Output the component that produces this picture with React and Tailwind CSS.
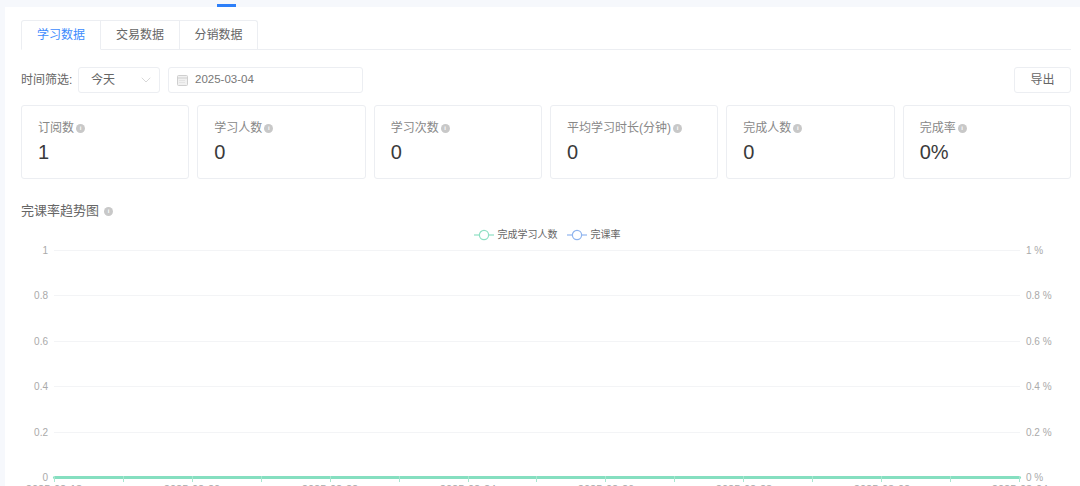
import React from "react";
import { ChevronDown } from "lucide-react";

const font = "font-['Liberation_Sans','Noto_Sans_CJK_SC',sans-serif]";

const stats = [
  { label: "订阅数", value: "1" },
  { label: "学习人数", value: "0" },
  { label: "学习次数", value: "0" },
  { label: "平均学习时长(分钟)", value: "0" },
  { label: "完成人数", value: "0" },
  { label: "完成率", value: "0%" },
];

const rows = [
  { left: "1", right: "1 %" },
  { left: "0.8", right: "0.8 %" },
  { left: "0.6", right: "0.6 %" },
  { left: "0.4", right: "0.4 %" },
  { left: "0.2", right: "0.2 %" },
];

const dates = ["2025-02-18", "2025-02-20", "2025-02-22", "2025-02-24", "2025-02-26", "2025-02-28", "2025-03-02", "2025-03-04"];
const ticks = Array.from({ length: 15 }, (_, i) => i);

const Dot = () => (
  <span className="inline-flex w-[9px] h-[9px] rounded-full bg-[#c8c8c8] items-center justify-center text-white text-[6px] leading-none font-bold">i</span>
);

const Legend = ({ color, label }) => (
  <div className="flex items-center gap-[4px]">
    <svg width="20" height="12" viewBox="0 0 20 12">
      <path d="M0 6h20" stroke={color} strokeWidth="1.2" />
      <circle cx="10" cy="6" r="4.6" fill="white" stroke={color} strokeWidth="1.2" />
    </svg>
    <span>{label}</span>
  </div>
);

const CalendarIcon = () => (
  <svg width="11" height="11" viewBox="0 0 11 11">
    <rect x="0.5" y="0.5" width="10" height="10" rx="1" fill="#f1f1f1" stroke="#cfcfcf" />
    <path d="M0.5 3h10" stroke="#cfcfcf" />
    <path d="M2.5 5.5h6M2.5 7.5h6" stroke="#d6d6d6" strokeDasharray="1 1" />
  </svg>
);

export default function App() {
  return (
    <div className={`w-[1080px] h-[486px] overflow-hidden bg-[#f6f8fc] pt-[7px] pl-[5px] ${font}`}>
      <div className="relative h-[479px] bg-white pl-4 pr-[9px] pt-[13px]">
        <div className="absolute left-[212px] -top-[3px] w-[19px] h-[3px] bg-[#2d7ff9]" />

        <div className="flex h-[30px] border-b border-[#eceef2] text-[12px]">
          <div className="w-[80px] h-[30px] bg-white border border-[#eceef2] border-b-white rounded-tl-[3px] flex items-center justify-center text-[#3d8bfd]">学习数据</div>
          <div className="w-[79px] h-[29px] border-t border-r border-[#eceef2] flex items-center justify-center text-[#666]">交易数据</div>
          <div className="w-[78px] h-[29px] border-t border-r border-[#eceef2] rounded-tr-[3px] flex items-center justify-center text-[#666]">分销数据</div>
        </div>

        <div className="flex items-center h-[26px] mt-[17px] text-[12px]">
          <span className="w-[57px] text-[#666]">时间筛选:</span>
          <div className="w-[82px] h-[26px] border border-[#eceef2] rounded-[3px] flex items-center justify-between pl-[12px] pr-[5px] text-[#666]">
            今天
            <ChevronDown size={16} strokeWidth={1} className="text-[#c4c4c4]" />
          </div>
          <div className="w-[195px] h-[26px] ml-[8px] border border-[#eceef2] rounded-[3px] flex items-center pl-[8px] gap-[7px] text-[11.5px] text-[#777]">
            <CalendarIcon />
            2025-03-04
          </div>
          <div className="ml-auto w-[57px] h-[26px] border border-[#eceef2] rounded-[3px] flex items-center justify-center text-[#666]">导出</div>
        </div>

        <div className="grid grid-cols-6 gap-2 mt-[12px]">
          {stats.map((s) => (
            <div key={s.label} className="h-[74px] border border-[#eceef2] rounded-[3px] pl-4 pt-[12px]">
              <div className="flex items-center gap-[2px] text-[12px] leading-[20px] text-[#888]">
                {s.label}
                <Dot />
              </div>
              <div className="text-[20px] leading-[24px] mt-[2px] text-[#3a3a3a]">{s.value}</div>
            </div>
          ))}
        </div>

        <div className="flex items-center gap-[5px] mt-[22px] text-[13px] leading-[20px] text-[#666]">
          完课率趋势图
          <Dot />
        </div>

        <div className="flex justify-center gap-[9px] mt-[8px] pl-[2px] text-[10px] leading-[12px] text-[#666]">
          <Legend color="#8fe0c4" label="完成学习人数" />
          <Legend color="#8fb4ee" label="完课率" />
        </div>

        <div className="mt-[4px] flex flex-col gap-[35.6px]">
          {rows.map((r) => (
            <div key={r.left} className="flex items-center h-[10px] text-[10px] text-[#aaa]">
              <span className="w-[27px] text-right">{r.left}</span>
              <div className="ml-[6px] w-[966px] h-px bg-[#f3f4f6]" />
              <span className="ml-[6px]">{r.right}</span>
            </div>
          ))}
          <div className="flex items-center h-[10px] text-[10px] text-[#aaa]">
            <span className="w-[27px] text-right">0</span>
            <div className="relative ml-[5px] w-[968px] h-[3px] bg-[#85dfc0] rounded-full">
              <div className="absolute left-px right-px top-0 flex justify-between">
                {ticks.map((t) => (
                  <span key={t} className="w-px h-[6px] bg-[#a9e6d0]" />
                ))}
              </div>
            </div>
            <span className="ml-[5px]">0 %</span>
          </div>
        </div>

        <div className="flex justify-between w-[966px] ml-[33px] text-[11px] leading-[12px] text-[#aaa] mt-0">
          {dates.map((d) => (
            <span key={d} className="w-0 flex justify-center whitespace-nowrap">{d}</span>
          ))}
        </div>
      </div>
    </div>
  );
}
